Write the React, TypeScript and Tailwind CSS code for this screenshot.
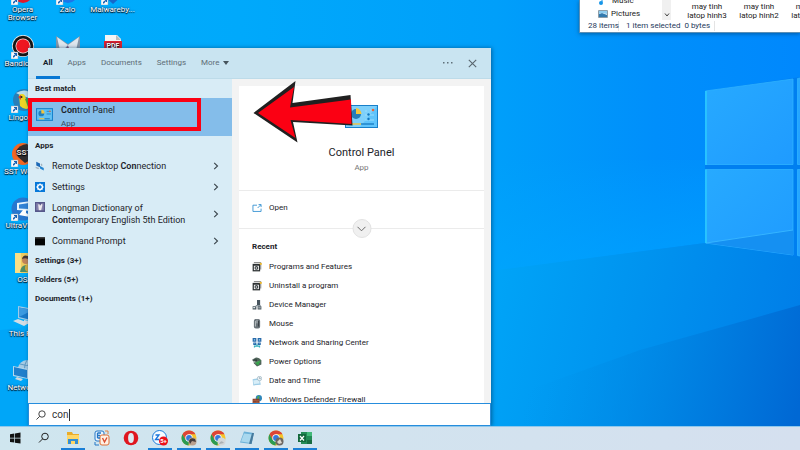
import type { ReactNode } from "react";

function Wallpaper() {
  return (
    <svg className="absolute inset-0 h-full w-full" viewBox="0 0 800 426" preserveAspectRatio="xMaxYMin slice" aria-hidden="true">
      <defs>
        <linearGradient id="sky" x1="0" y1="0" x2="1" y2="0">
          <stop offset="0" stopColor="#00adfc" />
          <stop offset="0.3" stopColor="#00a9fb" />
          <stop offset="0.62" stopColor="#009ffa" />
          <stop offset="0.82" stopColor="#008ffb" />
          <stop offset="1" stopColor="#0088fd" />
        </linearGradient>
        <linearGradient id="floor" gradientUnits="userSpaceOnUse" x1="480" y1="260" x2="800" y2="330">
          <stop offset="0" stopColor="#00a6f8" />
          <stop offset="0.5" stopColor="#0093ef" />
          <stop offset="1" stopColor="#007ee8" />
        </linearGradient>
        <linearGradient id="deep" gradientUnits="userSpaceOnUse" x1="540" y1="340" x2="800" y2="400">
          <stop offset="0" stopColor="#0094ea" stopOpacity="0" />
          <stop offset="0.5" stopColor="#0083e2" stopOpacity="0.8" />
          <stop offset="1" stopColor="#0068d4" />
        </linearGradient>
        <linearGradient id="beam" gradientUnits="userSpaceOnUse" x1="600" y1="150" x2="612" y2="258">
          <stop offset="0" stopColor="#00a8ff" stopOpacity="0" />
          <stop offset="1" stopColor="#00a8ff" stopOpacity="0.5" />
        </linearGradient>
        <linearGradient id="pane" x1="0" y1="0" x2="1" y2="1">
          <stop offset="0" stopColor="#27aaff" />
          <stop offset="1" stopColor="#1f9bff" />
        </linearGradient>
      </defs>
      <rect width="800" height="426" fill="url(#sky)" />
      <path d="M480 160 705 160V243L480 273Z" fill="url(#beam)" />
      <path d="M0 330 490 271 705 243 800 256V426H0Z" fill="url(#floor)" />
      <path d="M500 400 640 350 740 322 800 305V426H500Z" fill="url(#deep)" />
      <path d="M705 91 800 77V257L705 243Z" fill="#007ff0" />
      <g fill="url(#pane)" stroke="#2fb3ff" strokeWidth="0.8">
        <path d="M705.500 91 793 79V164.500H705.500Z" />
        <path d="M705.500 169.500H793V255L705.500 243Z" />
        <path d="M797.500 78.500 803 77.500V164.500H797.500Z" />
        <path d="M797.500 169.500H803V256.500L797.500 255.500Z" />
      </g>
      <path d="M706 243 793 230V255Z" fill="#1590f2" />
      <path d="M706 243 793 230" stroke="#35b4ff" />
      <path d="M706 91V165M706 169.500V243" stroke="#2ac9ff" strokeWidth="1.600" />
    </svg>
  );
}

function Shortcut() {
  return (
    <g>
      <rect x="0" y="17" width="7" height="7" fill="#f5f9fc" stroke="#8ca3b3" strokeWidth=".5" />
      <path d="M2 22.500V21L4.500 19H3V18H6V21H5V20L3 22.500Z" fill="#1560b4" />
    </g>
  );
}

function DesktopArt({ name }: { name: string }) {
  const art: Record<string, ReactNode> = {
    opera: <><circle cx="12" cy="12" r="10" fill="#e0192d" /><ellipse cx="12" cy="12" rx="4" ry="7" fill="#fff" /><Shortcut /></>,
    zalo: <><circle cx="12" cy="12" r="10" fill="#1d75e8" /><Shortcut /></>,
    shield: <><path d="M2 3H22V14L12 23 2 14Z" fill="#1768ca" /><path d="M6 16V7L12 13 18 7V16" fill="none" stroke="#fff" strokeWidth="2.500" /><Shortcut /></>,
    bandicam: <><circle cx="12" cy="11" r="11" fill="#eee" /><circle cx="12" cy="11" r="10.300" fill="#151515" /><circle cx="12" cy="11" r="7.500" fill="#f7e8e8" /><circle cx="12" cy="11" r="6.800" fill="#ee1620" /><Shortcut /></>,
    wings: <><path d="M0 1 12 9 24 1V20H0Z" fill="#8496a8" /><path d="M1 2 12 10 23 2 19 20H5Z" fill="#dfe7ee" /><path d="M12 10 3 20H14Z" fill="#77819f" /><path d="M12 11 8 20H15Z" fill="#8d3558" /></>,
    pdf: <><path d="M4 0H16L20 4V24H4Z" fill="#f4f4f4" /><path d="M15 0V5H20Z" fill="#bbb" /><rect x="3" y="6" width="18" height="9" fill="#df2330" /><text x="12" y="13" textAnchor="middle" fontSize="7" fontWeight="700" fill="#fff">PDF</text></>,
    lingoes: <><circle cx="13" cy="11" r="11" fill="#277fb9" /><path d="M5 4Q15-2 22 6L18 9 9 6Z" fill="#b9ddea" /><path d="M8 6Q14 3 15 10L22 17Q15 23 9 17Z" fill="#ecd426" /><path d="M14 10Q21 7 22 15L17 18Z" fill="#49a43d" /><path d="M7 8 10 6V11Z" fill="#dc4332" /><circle cx="10.500" cy="8" r="1" fill="#222" /><Shortcut /></>,
    sst: <><circle cx="12" cy="11" r="11" fill="#f16622" /><path d="M5 8Q8 2 16 1L24 8V14L14 20 7 14Z" fill="#302d2d" /><text x="13" y="12" textAnchor="middle" fontSize="8" fontWeight="700" fill="#e4e0dc">SST</text><Shortcut /></>,
    ultra: <><circle cx="12" cy="12" r="11.500" fill="#2777cf" /><path d="M6 6 20 4V14L6 13Z" fill="#e8f6ff" /><path d="M8 7.500 18 6V12L8 11.500Z" fill="#3283d5" /><path d="M12 13H15V16L19 18V20L8 18Z" fill="#fff" /><Shortcut /></>,
    user: <><path d="M4 2H17V22H4Z" fill="#efcc61" /><path d="M4 2H10V22H4Z" fill="#f9df86" /><circle cx="15" cy="9" r="4" fill="#c18459" /><path d="M11 8Q12 3 17 5L19 9Q15 6 11 8Z" fill="#493730" /><path d="M9 21Q10 13 17 14L22 21Z" fill="#4f8e68" /><circle cx="18" cy="17" r="4" fill="#d4ad3e" /></>,
    pc: <><path d="M7 1 23 4V17L7 13Z" fill="#9fcbe7" /><path d="M8 2.500 22 5V15.500L8 12Z" fill="#1879c8" /><path d="M8 2.500 22 5 8 12Z" fill="#3b9ae0" /><path d="M13 15 18 16V19H13ZM2 16 7 14 18 18 13 21Z" fill="#d3dde4" /></>,
    network: <><circle cx="16" cy="10" r="9" fill="#a7cce4" /><path d="M9 5Q15 8 23 5M8 12H24M16 1Q11 9 16 19" fill="none" stroke="#5d9ac5" /><path d="M2 7 17 10V20L2 17Z" fill="#b5d8ed" /><path d="M3 8 16 11V19L3 16Z" fill="#207fcb" /><path d="M6 18 12 20 10 22 4 20Z" fill="#cdd8df" /></>,
  };
  return <svg viewBox="0 0 24 24" className="h-6 w-6 shrink-0" aria-hidden="true">{art[name]}</svg>;
}

const shortcuts: ([string, string] | null)[] = [
  ["opera", "Opera Browser"], ["zalo", "Zalo"], ["shield", "Malwareby..."],
  ["bandicam", "Bandicam"], ["wings", ""], ["pdf", ""],
  ["lingoes", "Lingoes"], null, null,
  ["sst", "SST World"], null, null,
  ["ultra", "UltraView"], null, null,
  ["user", "OS"], null, null,
  ["pc", "This PC"], null, null,
  ["network", "Network"], null, null,
];

function DesktopIcons() {
  return (
    <div className="relative -mt-[19px] grid w-[135px] auto-rows-[54px] grid-cols-3">
      {shortcuts.map((s, i) =>
        s ? (
          <button key={i} type="button" className="flex flex-col items-center gap-px text-center text-[8px] leading-[8px] text-white [text-shadow:0_1px_1px_#000,0_0_2px_#003]">
            <DesktopArt name={s[0]} />
            <span>{s[1]}</span>
          </button>
        ) : (
          <span key={i} />
        ),
      )}
    </div>
  );
}

function ExplorerWindow() {
  return (
    <section aria-label="File Explorer" className="absolute top-0 right-0 flex h-[33px] w-[221px] flex-col overflow-hidden border-b border-l border-[#5c8fb5] bg-white text-[8px] text-[#222] shadow-[0_1px_4px_#00376088]">
      <div className="flex h-5 items-end">
        <ul className="w-[82px] pl-[18px] leading-[13px]">
          <li className="flex items-center gap-[5px]">
            <svg viewBox="0 0 9 9" className="h-[9px] w-[9px]" aria-hidden="true"><path d="M4 0V6M4 1 8 2" stroke="#1595e8" /><circle cx="3" cy="7" r="2" fill="#1595e8" /></svg>
            Music
          </li>
          <li className="flex items-center gap-[3px]">
            <svg viewBox="0 0 10 8" className="h-2 w-[10px]" aria-hidden="true"><path d="M.5.5H9.500V7.500H.5Z" fill="#e8f3f9" stroke="#8d9da8" /><path d="M1 4 4 3 9 5V7H1Z" fill="#3379ad" /><path d="M1 1H9V4L4 3 1 4Z" fill="#8fcdf0" /></svg>
            Pictures
          </li>
        </ul>
        <div className="flex h-5 w-[9px] items-end justify-center bg-[#f0f0f0] pb-[3px]">
          <svg viewBox="0 0 6 4" className="h-1 w-[6px]" aria-hidden="true"><path d="M1 .5 3 3 5 .5" fill="none" stroke="#444" /></svg>
        </div>
        <div className="flex flex-1 overflow-hidden pl-[10px]">
          {["hinh3", "hinh2", "hinh1"].map((n) => (
            <span key={n} className="w-[52px] shrink-0 text-center leading-[9px]">
              cach don rac<br />may tinh<br />latop {n}
            </span>
          ))}
        </div>
      </div>
      <footer className="flex h-3 items-center pl-2 text-[8px] leading-[10px] text-[#1e395b]">
        <span className="w-[31px] border-r border-[#e4e4e4] whitespace-nowrap">28 items</span>
        <span className="pl-[7px]">1 item selected</span>
        <span className="border-r border-[#e4e4e4] px-1">0 bytes</span>
      </footer>
    </section>
  );
}

function AppIcon({ name, className }: { name: string; className: string }) {
  const art: Record<string, ReactNode> = {
    panel: <><rect x=".5" y="2.500" width="15" height="11" fill="#60c1f5" stroke="#1681cb" /><circle cx="5" cy="7" r="2.700" fill="#217fbd" /><path d="M5 7V3.500A3 3 0 0 1 8 7Z" fill="#f4c63c" /><path d="M10 5H14M10 7.500H14" stroke="#217fbd" strokeWidth=".8" /><path d="M3 12H8" stroke="#f4c63c" /><path d="M8 12H13" stroke="#217fbd" /><circle cx="13" cy="5" r=".8" fill="#e96c3c" /></>,
    remote: <><path d="M2 1 8 4V10L2 7Z" fill="#1c69b7" /><path d="M8 8 14 11V15L8 12Z" fill="#2485d0" /><path d="M1 9 7 11 5 13 1 11ZM9 5 11 4 12 7 10 8Z" fill="#a3b3be" /></>,
    settings: <><rect width="16" height="16" fill="#0879d9" /><circle cx="8" cy="8" r="4" fill="none" stroke="#fff" strokeWidth="2" /><path d="M8 2V14M2 8H14M4 4 12 12M12 4 4 12" stroke="#fff" strokeWidth="1.500" /><circle cx="8" cy="8" r="2.300" fill="#0879d9" /></>,
    longman: <><rect width="16" height="16" fill="#57588b" /><path d="M2 2H6V13H2ZM10 2H14V13H10Z" fill="#8582ad" /><path d="M5 4 7 3 8 6 10 3 12 4 10 13H6Z" fill="#eee9ed" /></>,
    cmd: <><rect y="2" width="16" height="13" fill="#050505" /><path d="M0 2H16V4H0Z" fill="#424242" /></>,
    programs: <><rect x="1" y="3" width="12" height="12" fill="#2c3032" /><path d="M3 1H14V12" fill="none" stroke="#777" strokeWidth="1.500" /><rect x="3" y="6" width="8" height="7" fill="#fff" /><circle cx="7" cy="9.500" r="3" fill="#3e4548" /><circle cx="7" cy="9.500" r="1.200" fill="#eee" /><circle cx="14" cy="3" r="1.800" fill="#edb92d" /></>,
    device: <><rect x="8" y="0" width="5" height="8" fill="#47545e" /><path d="M6 8H14V10H6Z" fill="#87949c" /><path d="M1 10H7V15H1ZM9 10H15V15H9Z" fill="#4c5860" /><path d="M2 11H5V13H2ZM10 12H14V13H10Z" fill="#dce6eb" /></>,
    mouse: <><rect x="3" y="0" width="10" height="15" rx="3" fill="#687177" /><path d="M8 1V7M5.500 3V12" stroke="#e3e7e9" /><path d="M10.500 3V12" stroke="#333b40" strokeWidth="1.500" /></>,
    share: <><path d="M1 0H7V6H1ZM9 0H15V6H9Z" fill="#286aaa" /><path d="M2 7H7V11H2ZM9 7H14V11H9Z" fill="#286aaa" /><path d="M3 2H5V4H3ZM11 2H13V4H11ZM4 8H5V9H4ZM11 8H12V9H11Z" fill="#9ed6f5" /><path d="M8 10V13M3 13H13M4 15V12M12 15V12" stroke="#34afbc" strokeWidth="2" /></>,
    power: <><path d="M2 3Q9-2 15 5V12L8 15 3 10Z" fill="#50645a" /><path d="M0 3 6 6 4 9 13 6 11 10 4 10Z" fill="#9ea9a5" /><path d="M5 9 14 5 10 14Z" fill="#36a34b" /><path d="M1 5H8" stroke="#273635" strokeWidth="2" /></>,
    date: <><path d="M1 5 12 3 14 14 2 15Z" fill="#9fcde6" /><path d="M2 7 12 6V12L3 13Z" fill="#d8eef8" /><circle cx="12" cy="4" r="3.500" fill="#edf3f6" stroke="#8eabb9" /><path d="M12 2V4H14" fill="none" stroke="#5c7785" strokeWidth=".8" /></>,
    firewall: <><circle cx="11" cy="5" r="5" fill="#2e86ba" /><path d="M9 2 12 1 11 6 8 7Z" fill="#4eaa50" /><path d="M1 6H12V15H1Z" fill="#88402c" /><path d="M1 9H12M1 12H12M5 6V9M8 9V12" stroke="#bf7758" strokeWidth=".7" /></>,
    open: <><path d="M8 3.500H1.500V13.500H14.500V9" fill="none" stroke="#2387ce" strokeWidth="1.300" /><path d="M9 8 14 3M10.500 2.500H14.500V6.500" fill="none" stroke="#2387ce" strokeWidth="1.300" /></>,
  };
  return <svg viewBox="0 0 16 16" className={className} aria-hidden="true">{art[name]}</svg>;
}

function ControlPanelArt() {
  return (
    <svg viewBox="0 0 33 23" className="h-[23px] w-[33px]" aria-hidden="true">
      <rect x=".5" y=".5" width="32" height="22" fill="#5fc4fb" stroke="#187fc9" />
      <path d="M1 1H32L15 22H1Z" fill="#7ed0fb" />
      <circle cx="11" cy="9" r="5" fill="#267db8" />
      <path d="M11 9V3A6 6 0 0 1 16.500 9Z" fill="#f4c63d" />
      <path d="M20 6H22M25 5H29M20 10H29M20 15H29" stroke="#9addfb" />
      <circle cx="28" cy="5" r="1.300" fill="#e9653c" />
      <circle cx="23.500" cy="9.500" r="1.200" fill="#1377bf" /><circle cx="23.500" cy="14" r="1.200" fill="#1377bf" />
      <path d="M6 19H16" stroke="#eac34b" strokeWidth="1.500" /><path d="M16 19H29" stroke="#1e83c8" strokeWidth="1.500" />
    </svg>
  );
}

function Chevron() {
  return <svg viewBox="0 0 6 8" className="h-2 w-[6px] shrink-0" aria-hidden="true"><path d="M1.200.8 4.500 4 1.200 7.200" fill="none" stroke="#39444b" strokeWidth="1.100" /></svg>;
}

const apps: { icon: string; label: ReactNode; tall?: boolean }[] = [
  { icon: "remote", label: <>Remote Desktop <b className="font-semibold">Con</b>nection</> },
  { icon: "settings", label: "Settings" },
  { icon: "longman", label: <>Longman Dictionary of<br /><b className="font-semibold">Con</b>temporary English 5th Edition</>, tall: true },
  { icon: "cmd", label: "Command Prompt" },
];

const recent = [
  ["programs", "Programs and Features"],
  ["programs", "Uninstall a program"],
  ["device", "Device Manager"],
  ["mouse", "Mouse"],
  ["share", "Network and Sharing Center"],
  ["power", "Power Options"],
  ["date", "Date and Time"],
  ["firewall", "Windows Defender Firewall"],
];

function Heading({ children }: { children: ReactNode }) {
  return <h2 className="flex h-[19px] items-center pl-[7px] text-[8px] font-bold">{children}</h2>;
}

function Results() {
  return (
    <div className="w-[204px] shrink-0 bg-[#d8ecf6]">
      <Heading>Best match</Heading>
      <button type="button" className="flex h-[38px] w-full items-start bg-[#84bdea] pt-[6px] pl-2 text-left">
        <AppIcon name="panel" className="mt-[2px] h-[17px] w-[17px]" />
        <span className="ml-2 flex flex-col">
          <span className="text-[9px] leading-[13px]"><b className="font-semibold">Con</b>trol Panel</span>
          <span className="text-[8px] leading-[13px] text-[#34495a]">App</span>
        </span>
      </button>
      <Heading>Apps</Heading>
      <ul>
        {apps.map((a) => (
          <li key={a.icon}>
            <button type="button" className={`flex w-full items-center pr-[13px] pl-[7px] text-left text-[9px] leading-[12px] ${a.tall ? "h-[33px]" : "h-[21px]"}`}>
              <AppIcon name={a.icon} className={`h-[10px] w-[10px] shrink-0 ${a.tall ? "mt-[5px] self-start" : ""}`} />
              <span className="ml-[7px] flex-1 whitespace-nowrap">{a.label}</span>
              <Chevron />
            </button>
          </li>
        ))}
      </ul>
      <Heading>Settings (3+)</Heading>
      <Heading>Folders (5+)</Heading>
      <Heading>Documents (1+)</Heading>
    </div>
  );
}

function Details() {
  return (
    <div className="flex min-w-0 flex-1 bg-[#f3f3f3] px-[7px] pt-[7px]">
      <div className="flex-1 bg-white">
        <div className="flex h-[105px] flex-col items-center border-b border-[#ebebeb] pt-[19px]">
          <ControlPanelArt />
          <h1 className="mt-4 text-[11px] leading-[18px]">Control Panel</h1>
          <p className="text-[8px] leading-[12px] text-[#777]">App</p>
        </div>
        <div className="relative h-[38px] border-b border-[#ebebeb]">
          <button type="button" className="flex h-[34px] items-center gap-[7px] pl-[13px] text-[8px]">
            <AppIcon name="open" className="h-[10px] w-[10px]" />
            Open
          </button>
          <button type="button" aria-label="Show more" className="absolute -bottom-[10px] left-1/2 flex h-[19px] w-[19px] -translate-x-1/2 items-center justify-center rounded-full border border-[#e2e2e2] bg-[#f0f0f0]">
            <svg viewBox="0 0 10 6" className="h-[6px] w-[10px]" aria-hidden="true"><path d="M1 .8 5 4.800 9 .8" fill="none" stroke="#686868" /></svg>
          </button>
        </div>
        <h2 className="mt-2 flex h-5 items-center pl-[13px] text-[8px] font-bold">Recent</h2>
        <ul>
          {recent.map(([icon, label]) => (
            <li key={label}>
              <button type="button" className="flex h-[19px] items-center gap-[7px] pl-[13px] text-[8px] whitespace-nowrap">
                <AppIcon name={icon} className="h-[10px] w-[10px]" />
                {label}
              </button>
            </li>
          ))}
        </ul>
      </div>
    </div>
  );
}

function SearchWindow() {
  return (
    <section aria-label="Search" className="absolute top-12 bottom-0 left-7 flex w-[463px] flex-col text-[#1c2329] shadow-[1px_0_4px_#00376099]">
      <header className="flex h-[31px] shrink-0 items-center border-b border-[#bddbe9] bg-[#c9e4f1] pr-[14px] pl-[15px] text-[8px] text-[#5e6d76]">
        <nav className="flex h-full gap-[15px]">
          <button type="button" className="relative font-bold text-[#15212a]">
            All
            <span className="absolute -inset-x-[7px] -bottom-px h-[3px] bg-[#0878d3]" />
          </button>
          <button type="button">Apps</button>
          <button type="button">Documents</button>
          <button type="button">Settings</button>
          <button type="button" className="flex items-center gap-1">
            More
            <svg viewBox="0 0 6 4" className="h-1 w-[6px]" aria-hidden="true"><path d="M0 0H6L3 4Z" fill="#46545d" /></svg>
          </button>
        </nav>
        <button type="button" aria-label="Options" className="ml-auto">
          <svg viewBox="0 0 10 2" className="h-[2px] w-[10px]" aria-hidden="true"><path d="M0 0H1.500V1.500H0ZM4 0H5.500V1.500H4ZM8 0H9.500V1.500H8Z" fill="#60717b" /></svg>
        </button>
        <button type="button" aria-label="Close" className="ml-[15px]">
          <svg viewBox="0 0 9 9" className="h-[9px] w-[9px]" aria-hidden="true"><path d="M.8.8 8.200 8.200M8.200.8.8 8.200" stroke="#59666e" strokeWidth="1.100" /></svg>
        </button>
      </header>
      <div className="flex min-h-0 flex-1 overflow-hidden">
        <Results />
        <Details />
      </div>
      <label className="flex h-[23px] shrink-0 items-center gap-[6px] border border-[#268ddd] bg-white pl-[7px]">
        <svg viewBox="0 0 10 10" className="h-[10px] w-[10px]" aria-hidden="true"><circle cx="6" cy="4" r="3.200" fill="none" stroke="#454545" /><path d="M3.700 6.300.5 9.500" stroke="#454545" /></svg>
        <span className="flex flex-1 items-center">
          <input aria-label="Type here to search" defaultValue="con" className="w-[17px] text-[10px] leading-[14px] text-[#333] outline-none" />
          <span className="h-3 w-px bg-[#333]" />
        </span>
      </label>
    </section>
  );
}

function Annotations() {
  return (
    <>
      <div className="pointer-events-none absolute top-[98px] left-7 h-[33px] w-[173px] border-4 border-[#fb0013]" />
      <svg viewBox="0 0 100 62" className="pointer-events-none absolute top-[81px] left-[253px] h-[62px] w-[100px]" aria-hidden="true">
        <path d="M.5 32 42.500 0 39.500 22 97.500 14 99.500 44.500 40 41 44.500 61.500Z" fill="#202020" />
        <path d="M5 32 41 6 37 26.500 98 18.500 98.500 43 37.500 39 42.500 57Z" fill="#fb0013" />
      </svg>
    </>
  );
}

function Chrome({ badge }: { badge: ReactNode }) {
  return (
    <>
      <circle cx="8" cy="8" r="7.500" fill="#f5c52a" />
      <path d="M1.500 4.250A7.500 7.500 0 0 1 14.500 4.250H8L4.700 9.900Z" fill="#dd4436" />
      <path d="M1.500 4.250 4.750 9.900 8 11.500 7.500 15.500A7.500 7.500 0 0 1 1.500 4.250Z" fill="#2b9b53" />
      <circle cx="8" cy="8" r="3.700" fill="#fff" /><circle cx="8" cy="8" r="2.900" fill="#3679dc" />
      {badge}
    </>
  );
}

const tasks: { label: string; open?: boolean; art: ReactNode }[] = [
  { label: "Start", art: <path d="M3 4.200 7.300 3.500V7.700H3ZM8 3.400 13.500 2.500V7.700H8ZM3 8.400H7.300V12.600L3 12ZM8 8.400H13.500V13.600L8 12.700Z" fill="#111" /> },
  { label: "Search", art: <><circle cx="9" cy="6.500" r="3.300" fill="none" stroke="#222" /><path d="M6.700 8.800 3 12.500" stroke="#222" /></> },
  { label: "File Explorer", open: true, art: <><path d="M2 2H7L8 4H14V14H2Z" fill="#e9ac2b" /><path d="M2 5H14V14H2Z" fill="#ffd767" /><path d="M3 9H13V14H10V11H6V14H3Z" fill="#338fd6" /></> },
  { label: "UniKey", art: <><rect x="1" y="1" width="9" height="10" rx="2" fill="#e9f5ff" stroke="#2477c5" /><rect x="6" y="5" width="9" height="10" rx="2" fill="#fff1e5" stroke="#e07137" /><path d="M3.500 3H7M3.500 5.500H6M3.500 8H6M3.500 3V8" stroke="#2477c5" strokeWidth="1.300" /><path d="M8.500 8 10.500 12 13 7.500" fill="none" stroke="#d94f32" strokeWidth="1.400" /><path d="M11 1H14V4" fill="none" stroke="#e28446" /><path d="M1 12V15H5" fill="none" stroke="#2477c5" /></> },
  { label: "Opera", art: <><circle cx="8" cy="8" r="7.300" fill="#df1720" /><ellipse cx="8" cy="8" rx="2.900" ry="5" fill="#dcecf4" /></> },
  { label: "Zalo", open: true, art: <><circle cx="7.500" cy="7.500" r="7" fill="#f6fbff" stroke="#187bdb" /><path d="M3.500 5H7L3.500 9.500H7" fill="none" stroke="#1874db" strokeWidth="1.300" /><circle cx="11.500" cy="11" r="4.500" fill="#ec1019" /><text x="11.500" y="13" textAnchor="middle" fontSize="6" fontWeight="700" fill="#fff">5+</text></> },
  { label: "Chrome, first profile", open: true, art: <Chrome badge={<><circle cx="11.500" cy="11.500" r="4" fill="#bba18e" /><path d="M8 11Q9 7 14 9L15 12 11 11 9 14Z" fill="#433c3b" /></>} /> },
  { label: "Chrome, second profile", open: true, art: <Chrome badge={<><circle cx="11.500" cy="11.500" r="4" fill="#d1d7da" /><path d="M9 14Q11 9 14 13Z" fill="#a9b0b4" /></>} /> },
  { label: "Notepad", open: true, art: <><path d="M5 1.500 15 3 12.500 14 1 12.500Z" fill="#6bb1d8" /><path d="M5 3.500 14 4.500 11.500 13 2 11.500Z" fill="#a9d8ee" /><path d="M13 3 15 3 12.500 14 10 13.700Z" fill="#46799c" /></> },
  { label: "Chrome, third profile", open: true, art: <Chrome badge={<><circle cx="11.500" cy="11.500" r="4" fill="#6d6762" /><path d="M9 12 12 9 14 13 11 14Z" fill="#ddd6cc" /></>} /> },
  { label: "Excel", open: true, art: <><rect x="4" y="2" width="11" height="12" fill="#238b55" /><path d="M10 2H15V6H10Z" fill="#42b878" /><path d="M10 10H15V14H10Z" fill="#176c40" /><rect x="1" y="4" width="8" height="8" fill="#12693c" /><path d="M3 6 7 10.500M7 6 3 10.500" stroke="#fff" strokeWidth="1.200" /></> },
];

function Taskbar() {
  return (
    <footer className="relative flex h-6 shrink-0 border-t border-[#8fc8ec] bg-linear-to-r from-[#cfe6ef] to-[#d5e0ef]">
      {tasks.map((t) => (
        <button key={t.label} type="button" aria-label={t.label} className="flex w-[29px] flex-col items-center justify-between pt-[3px]">
          <svg viewBox="0 0 16 16" className="h-4 w-4" aria-hidden="true">{t.art}</svg>
          {t.open && <span className="h-[2px] w-6 bg-[#1a7fd6]" />}
        </button>
      ))}
    </footer>
  );
}

export default function App() {
  return (
    <div className="flex h-screen min-h-[450px] flex-col overflow-hidden font-['Roboto','Noto_Sans',sans-serif]">
      <main className="relative min-h-0 flex-1 overflow-hidden bg-[#00a4fb]">
        <Wallpaper />
        <DesktopIcons />
        <ExplorerWindow />
        <SearchWindow />
        <Annotations />
      </main>
      <Taskbar />
    </div>
  );
}
